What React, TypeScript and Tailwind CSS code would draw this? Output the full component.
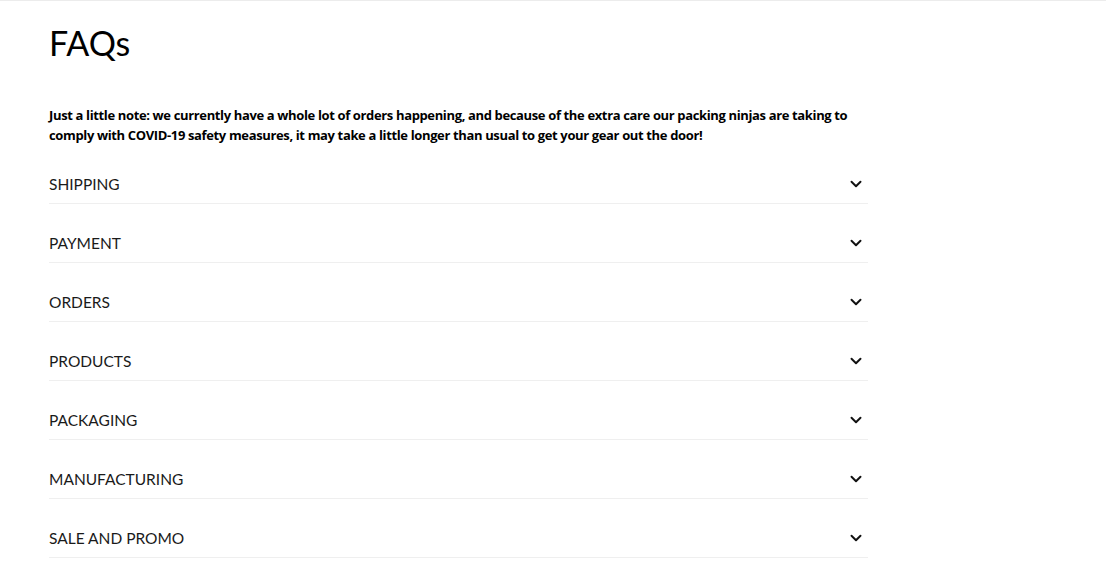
import { ChevronDown } from "lucide-react";

const sections = [
  "SHIPPING",
  "PAYMENT",
  "ORDERS",
  "PRODUCTS",
  "PACKAGING",
  "MANUFACTURING",
  "SALE AND PROMO",
];

export default function App() {
  return (
    <div
      className="min-h-[569px] w-full border-t border-[#ececec] bg-white text-[#111]"
      style={{ fontFamily: "Lato, 'Liberation Sans', sans-serif" }}
    >
      <div className="ml-[49px] w-[819px]">
        <h1 className="pt-[20px] text-[34px] leading-[44px] font-normal text-black">FAQs</h1>
        <p
          className="mt-[40px] text-[13px] leading-[20px] font-bold tracking-[-0.36px] text-black"
          style={{ fontFamily: "'Open Sans', 'Noto Sans', sans-serif" }}
        >
          Just a little note: we currently have a whole lot of orders happening, and because of the extra care our packing ninjas are taking to comply with COVID-19 safety measures, it may take a little longer than usual to get your gear out the door!
        </p>
        <div>
          {sections.map((s) => (
            <div
              key={s}
              className="flex items-center justify-between border-b border-[#efefef] pt-[28px] pb-[8px]"
            >
              <span className="text-[15.5px] leading-[22px] text-[#1a1a1a]">{s}</span>
              <ChevronDown className="mr-[3px] h-[18px] w-[18px] text-[#111]" strokeWidth={2.6} />
            </div>
          ))}
        </div>
      </div>
    </div>
  );
}
